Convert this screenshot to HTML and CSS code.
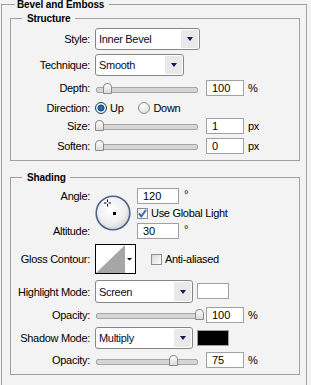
FILE: index.html
```html
<!DOCTYPE html>
<html lang="en">
<head>
    <meta charset="UTF-8">
    <meta name="viewport" content="width=device-width, initial-scale=1.0">
    <title>Bevel and Emboss</title>
    <link rel="stylesheet" href="styles.css">
</head>
<body>
    <fieldset class="group">
        <legend>Bevel and Emboss</legend>

        <fieldset class="panel">
            <legend>Structure</legend>
            <div class="row row-style">
                <span class="label">Style:</span>
                <div class="select select-style">
                    <span class="select-value">Inner Bevel</span>
                    <span class="select-btn"><i class="arrow"></i></span>
                </div>
            </div>
            <div class="row row-technique">
                <span class="label">Technique:</span>
                <div class="select select-technique">
                    <span class="select-value">Smooth</span>
                    <span class="select-btn"><i class="arrow"></i></span>
                </div>
            </div>
            <div class="row row-depth">
                <span class="label">Depth:</span>
                <div class="slider"><span class="thumb" style="left: 8px"></span></div>
                <input class="field" type="text" value="100">
                <span class="unit">%</span>
            </div>
            <div class="row row-direction">
                <span class="label">Direction:</span>
                <span class="radio on"></span><span class="radio-text">Up</span>
                <span class="radio"></span><span class="radio-text">Down</span>
            </div>
            <div class="row row-size">
                <span class="label">Size:</span>
                <div class="slider"><span class="thumb" style="left: 0px"></span></div>
                <input class="field" type="text" value="1">
                <span class="unit">px</span>
            </div>
            <div class="row row-soften">
                <span class="label">Soften:</span>
                <div class="slider"><span class="thumb" style="left: 0px"></span></div>
                <input class="field" type="text" value="0">
                <span class="unit">px</span>
            </div>
        </fieldset>

        <fieldset class="panel panel-shading">
            <legend>Shading</legend>
            <div class="angle-grid">
                <span class="label label-angle">Angle:</span>
                <svg class="dial" width="36" height="36" viewBox="0 0 36 36">
                    <defs>
                        <radialGradient id="dialFill" cx="45%" cy="40%" r="60%">
                            <stop offset="0" stop-color="#ffffff"/>
                            <stop offset="0.7" stop-color="#eeeeee"/>
                            <stop offset="1" stop-color="#d2d2d2"/>
                        </radialGradient>
                    </defs>
                    <circle cx="18" cy="18" r="16.8" fill="url(#dialFill)" stroke="#52618a" stroke-width="1.6"/>
                    <path d="M12.5 4.5v2.5M12.5 9v2.5M9 8h2.5M13.5 8h2.5" stroke="#000" stroke-width="1"/>
                    <rect x="18" y="17" width="3" height="3" fill="#000"/>
                </svg>
                <div class="cell">
                    <input class="field field-wide" type="text" value="120">
                    <span class="unit unit-deg">°</span>
                </div>
                <div class="cell">
                    <span class="checkbox on">
                        <svg width="9" height="9" viewBox="0 0 9 9"><path d="M1 4.5l2.3 2.8L8 1" fill="none" stroke="#3f67b3" stroke-width="2"/></svg>
                    </span>
                    <span class="check-text">Use Global Light</span>
                </div>
                <span class="label label-altitude">Altitude:</span>
                <div class="cell">
                    <input class="field field-wide" type="text" value="30">
                    <span class="unit unit-deg">°</span>
                </div>
            </div>
            <div class="row row-contour">
                <span class="label">Gloss Contour:</span>
                <svg class="contour" width="41" height="30" viewBox="0 0 41 30">
                    <rect x="0.5" y="0.5" width="40" height="29" fill="#fff" stroke="#000"/>
                    <polygon points="1,29 30,1 30,29" fill="#a6a6a6"/>
                    <polygon points="32,14 37,14 34.5,16.5" fill="#000"/>
                </svg>
                <span class="checkbox checkbox-aa"></span>
                <span class="check-text">Anti-aliased</span>
            </div>
            <div class="row row-highlight">
                <span class="label">Highlight Mode:</span>
                <div class="select select-mode">
                    <span class="select-value">Screen</span>
                    <span class="select-btn"><i class="arrow"></i></span>
                </div>
                <span class="swatch swatch-white"></span>
            </div>
            <div class="row row-opacity">
                <span class="label">Opacity:</span>
                <div class="slider"><span class="thumb" style="left: 100px"></span></div>
                <input class="field" type="text" value="100">
                <span class="unit">%</span>
            </div>
            <div class="row row-shadow">
                <span class="label">Shadow Mode:</span>
                <div class="select select-mode">
                    <span class="select-value">Multiply</span>
                    <span class="select-btn"><i class="arrow"></i></span>
                </div>
                <span class="swatch swatch-black"></span>
            </div>
            <div class="row row-opacity-last">
                <span class="label">Opacity:</span>
                <div class="slider"><span class="thumb" style="left: 74px"></span></div>
                <input class="field" type="text" value="75">
                <span class="unit">%</span>
            </div>
        </fieldset>
    </fieldset>
</body>
</html>
```

FILE: styles.css
```css
* {
    box-sizing: border-box;
}
body {
    margin: 0;
    width: 311px;
    height: 385px;
    overflow: hidden;
    background: #f3f3f3;
    color: #000;
    font-family: "Liberation Sans", Arial, sans-serif;
    font-size: 11px;
    letter-spacing: -0.3px;
}
fieldset {
    margin: 0;
    min-width: 0;
    border: 1px solid #a0a0a0;
}
legend {
    font-size: 10px;
    font-weight: bold;
    line-height: 9px;
    letter-spacing: -0.1px;
}
.group {
    width: 306px;
    margin-left: 1px;
    padding: 5px 6px 20px 8px;
}
.group > legend {
    margin-left: 5px;
    padding: 0 5px 0 2px;
}
.panel {
    padding: 5px 0 6px;
}
.panel > legend {
    margin-left: 11px;
    padding: 0 4px 0 5px;
}
.panel-shading {
    margin-top: 12px;
    padding-bottom: 5px;
}

/* rows */
.row {
    display: flex;
    align-items: center;
}
.label {
    flex: none;
    width: 79px;
    margin-right: 5px;
    text-align: right;
}
.row-style { height: 22px; }
.row-technique { height: 22px; margin-top: 4px; }
.row-depth { height: 20px; margin-top: 2px; }
.row-direction { height: 19px; }
.row-size { height: 17px; }
.row-soften { height: 17px; margin-top: 3px; }
.row-contour { height: 30px; margin-top: 5px; }
.row-highlight { height: 23px; margin-top: 6px; }
.row-opacity { height: 19px; margin-top: 2px; }
.row-shadow { height: 22px; margin-top: 3px; }
.row-opacity-last { height: 18px; margin-top: 2px; }

/* dropdowns */
.select {
    display: flex;
    height: 100%;
    border: 1px solid #868686;
    border-radius: 3px;
    background: #fff;
}
.select-style { width: 105px; }
.select-technique { width: 89px; }
.select-mode { width: 98px; }
.select-value {
    flex: 1;
    align-self: center;
    padding-left: 3px;
    color: #0a0a28;
}
.select-btn {
    width: 17px;
    margin: 1px 1px 1px 0;
    display: flex;
    align-items: center;
    justify-content: center;
    background: #e9e9e9;
    border-radius: 0 2px 2px 0;
}
.arrow {
    width: 0;
    height: 0;
    border-left: 3.5px solid transparent;
    border-right: 3.5px solid transparent;
    border-top: 4px solid #0c1a5a;
}

/* sliders */
.slider {
    position: relative;
    flex: none;
    width: 103px;
    height: 11px;
}
.slider::before {
    content: "";
    position: absolute;
    left: 1px;
    right: 0;
    top: 4px;
    height: 4px;
    border: 1px solid #a6a6a6;
    border-radius: 2px;
    background: #d6d6d6;
}
.thumb {
    position: absolute;
    top: 0;
    width: 9px;
    height: 11px;
    border: 1px solid #8a8a8a;
    border-radius: 5px 5px 1px 1px;
    background: linear-gradient(#ffffff, #dadada);
}

/* text fields */
.field {
    flex: none;
    width: 38px;
    height: 16px;
    margin: 0 0 0 8px;
    padding: 0 5px;
    border: 1px solid #a0a0a0;
    background: #fff;
    font: inherit;
    color: #000;
    outline: none;
}
.field-wide {
    width: 42px;
    margin-left: 0;
}
.unit {
    margin-left: 4px;
}
.unit-deg {
    margin-left: 5px;
    align-self: flex-start;
    line-height: 14px;
}

/* radios and checkboxes */
.radio {
    flex: none;
    width: 12px;
    height: 12px;
    border: 1px solid #8e8e8e;
    border-radius: 50%;
    background: radial-gradient(circle at 40% 35%, #ffffff, #d6d6d6);
}
.radio.on {
    border-color: #203c60;
    background: radial-gradient(circle, #2e7fc4 0, #15579a 2.6px, #0f3f70 3.2px, #eef2f6 3.8px, #cfd6de 100%);
}
.radio-text {
    margin: 0 15px 0 3px;
}
.checkbox {
    flex: none;
    width: 11px;
    height: 11px;
    display: flex;
    align-items: center;
    justify-content: center;
    border: 1px solid #8e8e8e;
    background: linear-gradient(135deg, #d8d8d8, #ffffff);
}
.checkbox.on {
    background: linear-gradient(135deg, #e4e4e4, #ffffff);
}
.checkbox-aa {
    margin-left: 15px;
}
.check-text {
    margin-left: 3px;
}

/* angle block */
.angle-grid {
    display: grid;
    grid-template-columns: 84px 42px auto;
    grid-template-rows: 17px 18px 17px;
}
.label-angle {
    grid-column: 1;
    grid-row: 1;
    align-self: center;
}
.label-altitude {
    grid-column: 1;
    grid-row: 3;
    align-self: center;
}
.dial {
    grid-column: 2;
    grid-row: 1 / 4;
    margin-top: 8px;
}
.cell {
    grid-column: 3;
    display: flex;
    align-items: center;
}

/* contour and swatches */
.contour {
    flex: none;
}
.swatch {
    flex: none;
    align-self: flex-start;
    width: 32px;
    height: 16px;
    margin: 3px 0 0 4px;
    border: 1px solid #a0a0a0;
}
.swatch-white { background: #fff; }
.swatch-black { background: #000; }
```
